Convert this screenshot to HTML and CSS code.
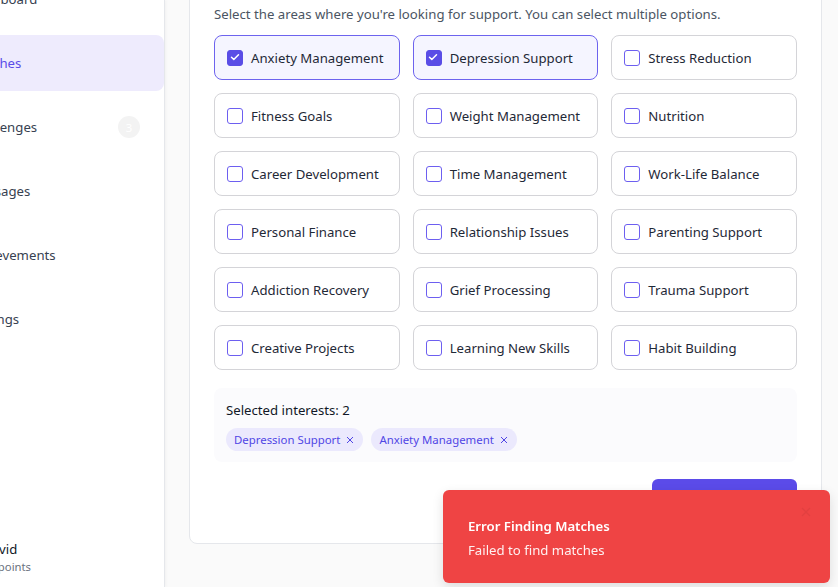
FILE: index.html
```html
<!DOCTYPE html>
<html lang="en">
<head>
<meta charset="utf-8">
<title>Matches</title>
<link rel="stylesheet" href="styles.css">
</head>
<body>
<div class="app">
  <aside class="sidebar">
    <nav class="nav">
      <a class="nav-item"><span class="nav-icon"></span><span class="nav-label">Dashboard</span></a>
      <a class="nav-item active"><span class="nav-icon"></span><span class="nav-label">Matches</span></a>
      <a class="nav-item"><span class="nav-icon"></span><span class="nav-label">Challenges</span><span class="badge">3</span></a>
      <a class="nav-item"><span class="nav-icon"></span><span class="nav-label">Messages</span></a>
      <a class="nav-item"><span class="nav-icon"></span><span class="nav-label">Achievements</span></a>
      <a class="nav-item"><span class="nav-icon"></span><span class="nav-label">Settings</span></a>
    </nav>
    <div class="user">
      <div class="avatar"></div>
      <div class="user-info">
        <div class="user-name">David</div>
        <div class="user-points">50 points</div>
      </div>
    </div>
  </aside>
  <main class="main">
    <section class="card">
      <h2 class="card-title">Your Interests</h2>
      <p class="desc">Select the areas where you're looking for support. You can select multiple options.</p>
      <div class="grid">
        <label class="option selected"><span class="cb checked"><svg viewBox="0 0 16 16" width="16" height="16"><path d="M4.5 8.2l2.3 2.3 4.7-4.8" fill="none" stroke="#fff" stroke-width="1.5" stroke-linecap="round" stroke-linejoin="round"/></svg></span><span>Anxiety Management</span></label>
        <label class="option selected"><span class="cb checked"><svg viewBox="0 0 16 16" width="16" height="16"><path d="M4.5 8.2l2.3 2.3 4.7-4.8" fill="none" stroke="#fff" stroke-width="1.5" stroke-linecap="round" stroke-linejoin="round"/></svg></span><span>Depression Support</span></label>
        <label class="option"><span class="cb"></span><span>Stress Reduction</span></label>
        <label class="option"><span class="cb"></span><span>Fitness Goals</span></label>
        <label class="option"><span class="cb"></span><span>Weight Management</span></label>
        <label class="option"><span class="cb"></span><span>Nutrition</span></label>
        <label class="option"><span class="cb"></span><span>Career Development</span></label>
        <label class="option"><span class="cb"></span><span>Time Management</span></label>
        <label class="option"><span class="cb"></span><span>Work-Life Balance</span></label>
        <label class="option"><span class="cb"></span><span>Personal Finance</span></label>
        <label class="option"><span class="cb"></span><span>Relationship Issues</span></label>
        <label class="option"><span class="cb"></span><span>Parenting Support</span></label>
        <label class="option"><span class="cb"></span><span>Addiction Recovery</span></label>
        <label class="option"><span class="cb"></span><span>Grief Processing</span></label>
        <label class="option"><span class="cb"></span><span>Trauma Support</span></label>
        <label class="option"><span class="cb"></span><span>Creative Projects</span></label>
        <label class="option"><span class="cb"></span><span>Learning New Skills</span></label>
        <label class="option"><span class="cb"></span><span>Habit Building</span></label>
      </div>
      <div class="selected-box">
        <div class="selected-title">Selected interests: 2</div>
        <div class="chips">
          <span class="chip">Depression Support <svg class="chip-x" viewBox="0 0 8 8" width="8" height="8"><path d="M1 1l6 6M7 1L1 7" stroke="currentColor" stroke-width="1" fill="none"/></svg></span>
          <span class="chip">Anxiety Management <svg class="chip-x" viewBox="0 0 8 8" width="8" height="8"><path d="M1 1l6 6M7 1L1 7" stroke="currentColor" stroke-width="1" fill="none"/></svg></span>
        </div>
      </div>
      <div class="actions">
        <button class="btn">Find Matches</button>
      </div>
    </section>
  </main>
</div>
<div class="toast">
  <div class="toast-title">Error Finding Matches</div>
  <div class="toast-desc">Failed to find matches</div>
  <svg class="toast-close" viewBox="0 0 12 12" width="12" height="12"><path d="M2 2l8 8M10 2l-8 8" stroke="currentColor" stroke-width="1.5" fill="none"/></svg>
</div>
</body>
</html>
```
FILE: styles.css
```css
* { box-sizing: border-box; }
html, body { margin: 0; padding: 0; overflow: hidden; }
body {
  font-family: "Noto Sans", "Open Sans", sans-serif;
  font-size: 13.2px;
  color: #1f2937;
  background: #fafafa;
  width: 838px;
  height: 587px;
}
.app {
  display: flex;
  margin-left: -92px;
  height: 587px;
}
.sidebar {
  width: 257px;
  flex: none;
  background: #fff;
  border-right: 1px solid #e5e7eb;
  box-shadow: 1px 0 3px rgba(0,0,0,0.04);
  display: flex;
  flex-direction: column;
  justify-content: space-between;
  height: 587px;
}
.nav {
  display: flex;
  flex-direction: column;
  gap: 8px;
  padding: 0 0 0 16px;
  margin-top: -29px;
}
.nav-item {
  display: flex;
  align-items: center;
  gap: 12px;
  height: 56px;
  padding: 0 24px 0 13px;
  border-radius: 8px;
  color: #374151;
  font-size: 13.2px;
}
.nav-item.active {
  background: #eeebfd;
  color: #5b4ce8;
}
.nav-icon { width: 20px; height: 20px; flex: none; }
.nav-label { flex: 1; }
.badge {
  width: 22px;
  height: 22px;
  border-radius: 50%;
  background: #f3f3f3;
  color: #fff;
  font-size: 11.3px;
  display: flex;
  align-items: center;
  justify-content: center;
}
.user {
  display: flex;
  align-items: center;
  gap: 12px;
  padding: 0 16px 10px 22px;
}
.avatar { width: 40px; height: 40px; flex: none; }
.user-name { font-size: 13.2px; color: #111827; line-height: 20px; }
.user-points { font-size: 11.3px; color: #6b7280; line-height: 16px; }
.main {
  flex: 1;
  padding: 0 16px 0 24px;
}
.card {
  background: #fff;
  border: 1px solid #e5e7eb;
  border-radius: 8px;
  margin-top: -53px;
  padding: 24px 24px 24px;
}
.card-title {
  margin: 0 0 8px;
  font-size: 17px;
  line-height: 24px;
  font-weight: 600;
}
.desc {
  margin: 0 0 11px;
  color: #4b5563;
  font-size: 13.2px;
  line-height: 20px;
}
.grid {
  display: grid;
  grid-template-columns: repeat(3, 1fr);
  gap: 13px;
}
.option {
  display: flex;
  align-items: center;
  gap: 8px;
  height: 45px;
  padding: 0 12px;
  border: 1px solid #d4d4d8;
  border-radius: 8px;
  font-size: 13.2px;
  color: #1f2937;
}
.option.selected {
  background: #f5f5ff;
  border-color: #6d63ee;
}
.cb {
  width: 16px;
  height: 16px;
  flex: none;
  border: 1.5px solid #6d5ff0;
  border-radius: 3px;
  display: flex;
}
.cb.checked {
  background: #5a4de6;
  border-color: #5a4de6;
}
.cb svg { margin: -1.5px; }
.selected-box {
  margin-top: 18px;
  background: #fbfbfd;
  border-radius: 8px;
  padding: 12px 12px 11px;
}
.selected-title {
  font-size: 13.2px;
  line-height: 20px;
  color: #111827;
}
.chips {
  display: flex;
  gap: 8px;
  margin-top: 8px;
}
.chip {
  display: inline-flex;
  align-items: center;
  gap: 6px;
  height: 23px;
  padding: 0 9px 0 8px;
  border-radius: 999px;
  background: #ebe9fd;
  color: #5046e5;
  font-size: 11.4px;
}
.chip-x { flex: none; }
.actions {
  display: flex;
  justify-content: flex-end;
  margin-top: 17px;
}
.btn {
  width: 145px;
  height: 40px;
  border: none;
  border-radius: 6px;
  background: #5b4be9;
  color: #fff;
  font-family: inherit;
  font-size: 13.2px;
  font-weight: 500;
}
.toast {
  position: fixed;
  right: 8px;
  bottom: 4px;
  width: 387px;
  height: 93px;
  background: #ef4444;
  border-radius: 6px;
  box-shadow: 0 4px 12px rgba(0,0,0,0.12);
  padding: 26px 24px 0 25px;
  color: #fff;
}
.toast-title {
  font-weight: 600;
  font-size: 13.2px;
  line-height: 20px;
}
.toast-desc {
  font-size: 13.2px;
  line-height: 20px;
  margin-top: 4px;
  color: rgba(255,255,255,0.92);
}
.toast-close {
  position: absolute;
  top: 16px;
  right: 18px;
  color: rgba(0,0,0,0.05);
}
```
